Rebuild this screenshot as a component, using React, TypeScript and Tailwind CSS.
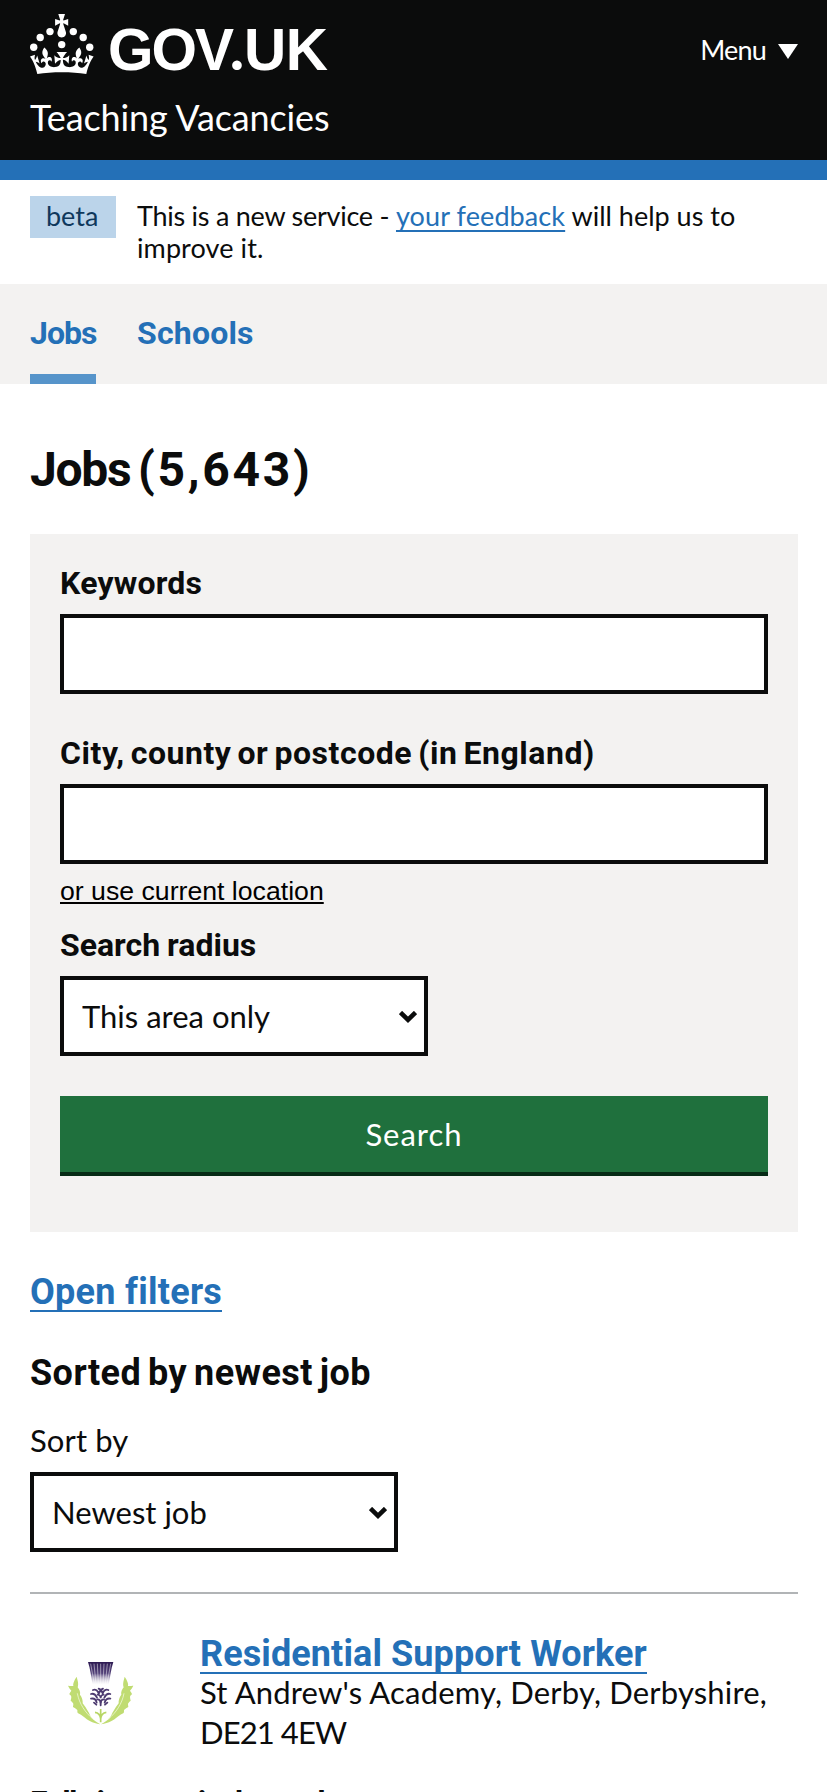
import type { ReactNode } from "react";

const regular = "font-['Lato','Noto_Sans',sans-serif] font-normal";
const bold = "font-['Roboto','Noto_Sans',sans-serif] font-bold";

function Crown() {
  return (
    <svg viewBox="0 0 64 60" className="h-[60px] w-16 shrink-0" fill="currentColor" aria-hidden="true">
      <circle cx="20" cy="17.6" r="3.7" />
      <circle cx="10.2" cy="23.5" r="3.7" />
      <circle cx="3.7" cy="33.2" r="3.7" />
      <circle cx="31.7" cy="30.6" r="3.7" />
      <circle cx="43.3" cy="17.6" r="3.7" />
      <circle cx="53.2" cy="23.5" r="3.7" />
      <circle cx="59.7" cy="33.2" r="3.7" />
      <path d="M33.1,9.8c.2-.1.3-.3.5-.5l4.6,2.4v-6.8l-4.6,1.5c-.1-.2-.3-.3-.5-.5l1.9-5.9h-6.7l1.9,5.9c-.2.1-.3.3-.5.5l-4.6-1.5v6.8l4.6-2.4c.1.2.3.3.5.5l-2.6,8c-.9,2.8,1.2,5.7,4.1,5.7h0c3,0,5.1-2.9,4.1-5.7l-2.6-8ZM37,37.9s-3.4,3.8-4.1,6.1c2.2,0,4.2-.5,6.4-2.8l-.7,8.5c-2-2.8-4.4-4.1-5.7-3.8.1,3.1.5,6.7,5.8,7.2,3.7.3,6.7-1.5,7-3.8.4-2.6-2-4.3-3.7-1.6-1.4-4.5,2.4-6.1,4.9-3.2-1.9-4.5-1.8-7.7,2.4-10.9,3,4,2.6,7.3-1.2,11.1,2.4-1.3,6.2,0,4,4.6-1.2-2.8-3.7-2.2-4.2.2-.3,1.7.7,3.7,3,4.2,1.9.3,4.7-.9,7-5.9-1.3,0-2.4.7-3.9,1.7l2.4-8c.6,2.3,1.4,3.7,2.2,4.5.6-1.6.5-2.8,0-5.3l5,1.8c-2.6,3.6-5.2,8.7-7.3,17.5-7.4-1.1-15.7-1.7-24.5-1.7h0c-8.8,0-17.1.6-24.5,1.7-2.1-8.9-4.7-13.9-7.3-17.5l5-1.8c-.5,2.5-.6,3.7,0,5.3.8-.8,1.6-2.3,2.2-4.5l2.4,8c-1.5-1-2.6-1.7-3.9-1.7,2.3,5,5.2,6.2,7,5.9,2.3-.4,3.3-2.4,3-4.2-.5-2.4-3-3.1-4.2-.2-2.2-4.6,1.6-6,4-4.6-3.7-3.7-4.2-7.1-1.2-11.1,4.2,3.2,4.3,6.4,2.4,10.9,2.5-2.8,6.3-1.3,4.9,3.2-1.8-2.7-4.1-1-3.7,1.6.3,2.3,3.3,4.1,7,3.8,5.4-.5,5.7-4.2,5.8-7.2-1.3-.2-3.7,1-5.7,3.8l-.7-8.5c2.2,2.3,4.2,2.7,6.4,2.8-.7-2.3-4.1-6.1-4.1-6.1h10.6Z" />
    </svg>
  );
}

function Thistle() {
  const leaf =
    "M50 80C42 92 38 102 40 108C33 109 29 107 24 107C27 113 31 119 34 122C30 128 28 131 28 133C31 135 33 137 34 140C34 146 32 149 32 152C35 154 38 157 40 161C40 166 39 169 39 171C43 173 48 176 52 180C52 184 52 187 53 189C60 192 66 196 72 201C82 210 96 219 121 223C110 216 102 211 95 204C90 197 88 189 83 182C79 175 74 167 68 160C69 152 66 142 60 134C62 127 58 118 53 112C57 100 52 90 50 80Z";
  return (
    <svg viewBox="0 0 240 240" className="size-20 shrink-0" aria-hidden="true">
      <defs>
        <linearGradient id="plume" x1="0" y1="0" x2="0" y2="1">
          <stop offset="0" stopColor="#2d1a52" />
          <stop offset="0.5" stopColor="#54437a" />
          <stop offset="1" stopColor="#ffffff" stopOpacity="0.3" />
        </linearGradient>
      </defs>
      <path d="M84 36h76c-7 20-9 44-14 68l-48 0c-5-24-7-48-14-68Z" fill="url(#plume)" />
      <path d="M92 41l11 62M102 41l6 62M112 41l3 62M122 41v62M132 41l-3 62M142 41l-6 62M152 41l-11 62" stroke="#fff" strokeWidth="2.4" opacity="0.6" />
      <g fill="none" stroke="#4d3b70" strokeWidth="5.5" strokeLinecap="round">
        <path d="M99 120c8-4 14 2 17 10M116 116c6 2 10 8 12 14M145 120c-8-4-14 2-17 10M129 116c-6 2-10 8-12 14" />
        <path d="M93 132c8-3 14 3 18 11M151 132c-8-3-14 3-18 11M113 134c5 0 9 5 9 11c0-6 4-11 9-11" />
        <path d="M93 146c9-2 15 3 17 12M151 146c-9-2-15 3-17 12M112 148c6 0 10 5 10 12c0-7 4-12 10-12" />
        <path d="M102 158l7 6M142 158l-7 6M122 153v13" />
      </g>
      <g fill="#c0dc72">
        <path d={leaf} />
        <path d={leaf} transform="translate(244 0) scale(-1 1)" />
      </g>
      <path d="M52 130c6 32 24 58 47 77M192 130c-6 32-24 58-47 77" fill="none" stroke="#edf6d3" strokeWidth="2.5" />
      <path d="M122 177v40M105 187c10 1 16 8 17 20M139 187c-10 1-16 8-17 20" fill="none" stroke="#b7d665" strokeWidth="5" />
    </svg>
  );
}

function Field({ label, spacing }: { label: string; spacing?: string }) {
  return (
    <label className="block">
      <span className={`${bold} block text-[32px] leading-10 whitespace-nowrap ${spacing ?? ""}`}>{label}</span>
      <input type="text" className="mt-[11px] block h-20 w-full rounded-none border-4 border-[#0b0c0c] bg-white" />
    </label>
  );
}

function Select({ value, className }: { value: string; className?: string }) {
  return (
    <span className={`relative block h-20 w-[368px] ${className ?? ""}`}>
      <select
        className={`${regular} h-full w-full appearance-none rounded-none border-4 border-[#0b0c0c] bg-white pl-[18px] text-[31px]`}
      >
        <option>{value}</option>
      </select>
      <svg viewBox="0 0 18 12" className="pointer-events-none absolute top-[35px] right-[11px] h-3 w-[18px]" aria-hidden="true">
        <path d="M1.5 1.5L9 8.8L16.5 1.5" fill="none" stroke="#0b0c0c" strokeWidth="4.6" />
      </svg>
    </span>
  );
}

function BlockLink({ children, className }: { children: ReactNode; className?: string }) {
  return (
    <a
      href="#"
      className={`${bold} block w-fit border-b-2 border-[#2470b7] text-[36px] whitespace-nowrap text-[#2470b7] ${className ?? ""}`}
    >
      {children}
    </a>
  );
}

export default function App() {
  return (
    <div className={`${regular} h-[1792px] w-[827px] overflow-hidden bg-white text-[#0b0c0c]`}>
      <header className="flex h-[180px] items-start justify-between border-b-[20px] border-[#2470b7] bg-[#0b0c0c] pt-3.5 pr-[29px] pl-[30px] text-white">
        <div>
          <div className="flex h-[60px]">
            <Crown />
            <span className="mt-[3px] ml-[14px] block font-['Liberation_Sans',Arial,sans-serif] text-[58.5px] leading-[60px] font-bold whitespace-nowrap">
              <span className="tracking-[-2px]">GOV</span>
              <span className="-ml-[2px] inline-block w-[14px] font-['Lato',sans-serif] font-black">.</span>
              <span className="tracking-[-0.5px]">UK</span>
            </span>
          </div>
          <p className="mt-[23px] text-[36px] leading-10 tracking-[-0.12px]">Teaching Vacancies</p>
        </div>
        <button type="button" className="mt-5 flex text-[27px] leading-8 tracking-[-0.8px]">
          Menu
          <svg viewBox="0 0 20 15" className="mt-2.5 ml-3 h-[15px] w-5" fill="currentColor" aria-hidden="true">
            <path d="M0 0h20L10 15z" />
          </svg>
        </button>
      </header>

      <div className="flex h-[104px] gap-[21px] pt-5 pl-[30px] text-[27px] leading-8">
        <strong className="-mt-1 h-[42px] w-[86px] bg-[#bbd4ea] pt-1 pl-4 font-normal text-[#0f385c]">beta</strong>
        <p className="whitespace-nowrap">
          <span className="tracking-[-0.25px]">This is a new service - </span>
          <a href="#" className="tracking-[0.1px] text-[#2470b7] underline decoration-2 underline-offset-4 [text-decoration-skip-ink:none]">
            your feedback
          </a>
          <span> will help us to</span>
          <br />
          <span className="tracking-[0.1px]">improve it.</span>
        </p>
      </div>

      <nav className={`${bold} flex h-[100px] gap-[41px] bg-[#f3f2f1] pl-[30px] text-[32px] leading-10 text-[#2470b7]`}>
        <a href="#" className="w-[66px] border-b-[10px] border-[#5694ca] pt-[29px] tracking-[-1px]">
          Jobs
        </a>
        <a href="#" className="pt-[29px] tracking-[0.2px]">
          Schools
        </a>
      </nav>

      <main className="pr-[29px] pl-[30px]">
        <h1 className={`${bold} mt-[61px] text-[48px] leading-[50px] tracking-[-1.3px] whitespace-nowrap`}>
          Jobs <span className="-ml-[3px] tracking-[2.7px]">(5,643)</span>
        </h1>

        <form className="mt-[39px] bg-[#f3f2f1] px-[30px] pt-[29px] pb-14">
          <Field label="Keywords" spacing="tracking-[0.2px]" />
          <div className="mt-[39px]">
            <Field label="City, county or postcode (in England)" spacing="tracking-[0.55px] [word-spacing:-2.5px]" />
          </div>
          <button
            type="button"
            className="mt-3 block font-['Liberation_Sans',Arial,sans-serif] text-[26.667px] leading-[30px] text-black underline decoration-2 underline-offset-2"
          >
            or use current location
          </button>
          <label className="mt-[19px] block">
            <span className={`${bold} block text-[32px] leading-10 [word-spacing:-1px]`}>Search radius</span>
            <Select value="This area only" className="mt-[11px]" />
          </label>
          <button type="button" className="mt-10 block h-20 w-full border-b-4 border-[#062b16] bg-[#1f703d] text-[31px] tracking-[1px] text-white">
            Search
          </button>
        </form>

        <BlockLink className="mt-10 h-10 leading-10 tracking-[0.27px]">Open filters</BlockLink>
        <h2 className={`${bold} mt-[41px] text-[36px] leading-10 tracking-[0.45px] [word-spacing:-2.5px]`}>Sorted by newest job</h2>
        <label className="mt-[27px] block">
          <span className="block text-[31px] leading-10 tracking-[0.1px]">Sort by</span>
          <Select value="Newest job" className="mt-3" />
        </label>

        <section className="mt-10 border-t-2 border-[#b1b4b6] pt-10">
          <div className="flex">
            <div className="w-[170px] pt-4 pl-[30px]">
              <Thistle />
            </div>
            <div className="text-[31px] leading-10">
              <BlockLink className="h-10 tracking-[0.1px]">Residential Support Worker</BlockLink>
              <p className="-mt-0.5 whitespace-nowrap tracking-[0.17px]">St Andrew's Academy, Derby, Derbyshire,</p>
              <p className="tracking-[-0.9px]">DE21 4EW</p>
            </div>
          </div>
          <h3 className={`${bold} mt-[30px] text-[32px] leading-10 tracking-[-1.5px] [word-spacing:-3px]`}>Full-time equivalent salary</h3>
        </section>
      </main>
    </div>
  );
}
